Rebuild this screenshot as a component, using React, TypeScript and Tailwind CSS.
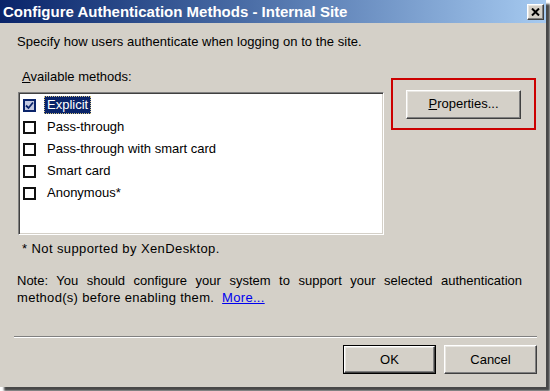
import React from 'react';

const methods = [
  { label: 'Explicit', checked: true, selected: true },
  { label: 'Pass-through', checked: false, selected: false },
  { label: 'Pass-through with smart card', checked: false, selected: false },
  { label: 'Smart card', checked: false, selected: false },
  { label: 'Anonymous*', checked: false, selected: false },
];

const raised =
  'border border-t-white border-l-white border-r-[#404040] border-b-[#404040] shadow-[inset_-1px_-1px_0_#808080,inset_1px_1px_0_#e8e6e1]';

function CheckBox({ checked }: { checked: boolean }) {
  if (checked) {
    return (
      <span className="w-[13px] h-[13px] border-2 border-[#0a246a] bg-[#c5cbe2] flex items-center justify-center shrink-0">
        <svg width="9" height="9" viewBox="0 0 9 9">
          <path d="M1 4.5 L3.5 7 L8 1.5" fill="none" stroke="#0a246a" strokeWidth="1.8" />
        </svg>
      </span>
    );
  }
  return <span className="w-[13px] h-[13px] border-2 border-[#111] bg-white shrink-0" />;
}

export default function App() {
  return (
    <div className="w-[550px] h-[391px] bg-white overflow-hidden font-['Liberation_Sans',Arial,sans-serif] text-[13px] text-black">
      <div className="w-[546px] h-[387px] bg-[#d4d0c8] flex flex-col shadow-[4px_4px_2px_rgba(40,40,40,0.85)]">
        {/* Title bar */}
        <div className="h-[23px] bg-gradient-to-r from-[#0a246a] to-[#a6caf0] flex items-center justify-between pl-[3px] pr-[2px] shrink-0">
          <span className="text-white font-bold text-[15px] leading-none">
            Configure Authentication Methods - Internal Site
          </span>
          <button className={`w-[17px] h-[16px] bg-[#d4d0c8] flex items-center justify-center ${raised}`}>
            <svg width="9" height="8" viewBox="0 0 9 8">
              <path d="M1 0.5 L8 7.5 M8 0.5 L1 7.5" stroke="#000" strokeWidth="2" />
            </svg>
          </button>
        </div>

        <p className="mt-[11px] ml-[17px] leading-[16px] tracking-[0.05px]">
          Specify how users authenticate when logging on to the site.
        </p>

        <div className="mt-[19px] ml-[18px] flex items-start">
          <div className="w-[366px] flex flex-col">
            <span className="pl-[4px] leading-[16px]">
              <span className="underline">A</span>vailable methods:
            </span>
            {/* Method list */}
            <div className="mt-[7px] h-[143px] bg-white border border-t-[#808080] border-l-[#808080] border-r-white border-b-white shadow-[inset_1px_1px_0_#404040,inset_-1px_-1px_0_#d4d0c8] pt-[1px]">
              {methods.map(m => (
                <div key={m.label} className="h-[22px] flex items-center pl-[4px]">
                  <CheckBox checked={m.checked} />
                  <span
                    className={`ml-[8px] px-[2px] h-[18px] leading-[16px] border border-dotted ${
                      m.selected ? 'bg-[#0a246a] text-white border-[#d0c080]' : 'border-transparent'
                    }`}
                  >
                    {m.label}
                  </span>
                </div>
              ))}
            </div>
            <span className="mt-[6px] pl-[4px] leading-[16px] tracking-[0.4px]">* Not supported by XenDesktop.</span>
          </div>

          <div className="ml-[7px] mt-[9px] w-[145px] h-[52px] border-2 border-[#cc0000] flex items-center justify-center">
            <button className={`w-[115px] h-[29px] bg-[#d4d0c8] ${raised}`}>
              <span className="underline">P</span>roperties...
            </button>
          </div>
        </div>

        <div className="mt-[15px] ml-[17px] w-[505px] leading-[17px]">
          <p className="text-justify [text-align-last:justify]">
            Note: You should configure your system to support your selected authentication
          </p>
          <p className="tracking-[0.3px]">
            method(s) before enabling them. <span className="text-[#0000ee] underline ml-[4px]">More...</span>
          </p>
        </div>

        <div className="mt-[30px] ml-[14px] w-[523px] h-[2px] border-t border-t-[#808080] border-b border-b-white" />

        <div className="mt-[7px] flex justify-end gap-[8px] pr-[9px]">
          <div className="w-[93px] h-[29px] border border-black">
            <button className={`w-full h-full bg-[#d4d0c8] ${raised}`}>OK</button>
          </div>
          <button className={`w-[93px] h-[29px] bg-[#d4d0c8] ${raised}`}>Cancel</button>
        </div>
      </div>
    </div>
  );
}
